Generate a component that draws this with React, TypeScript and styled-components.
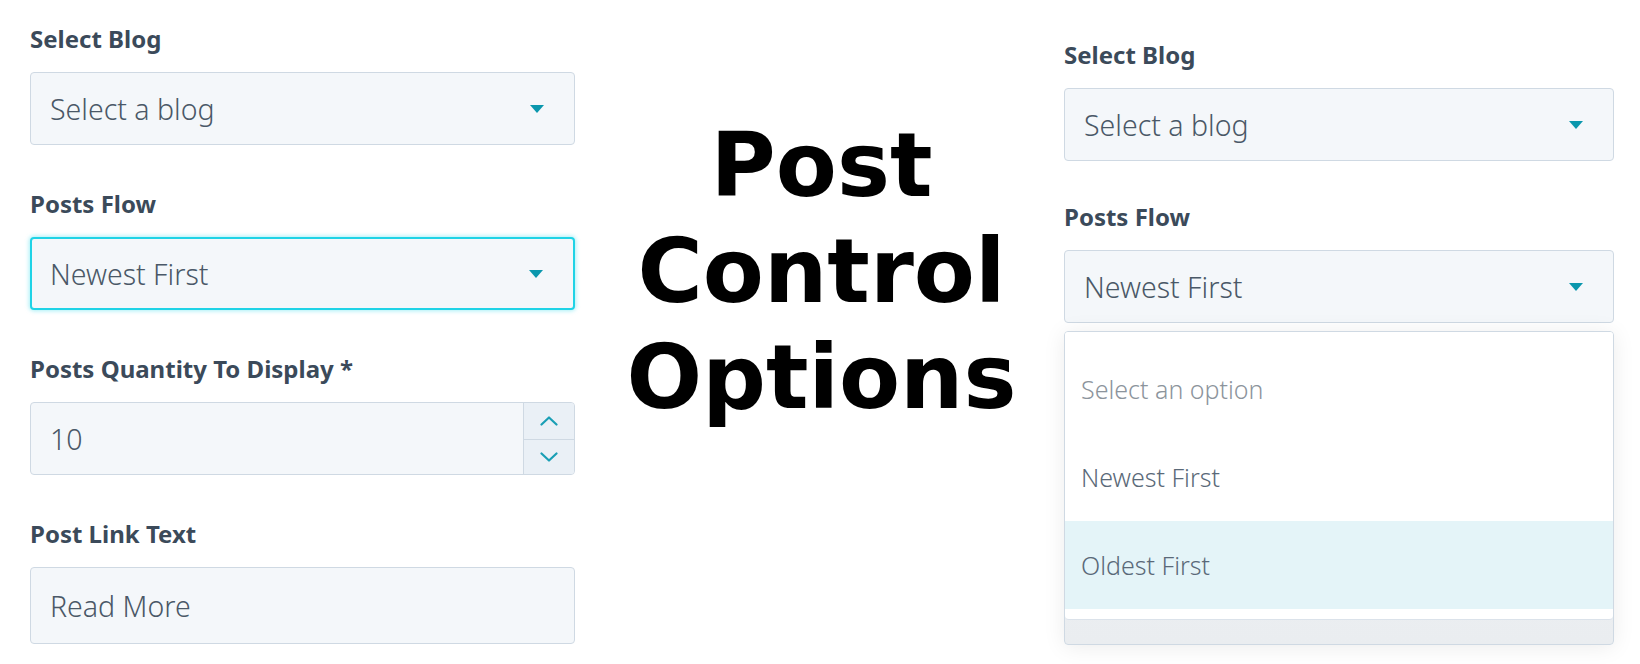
import React from "react";
import styled, { createGlobalStyle } from "styled-components";

const GlobalStyle = createGlobalStyle`
  html, body {
    margin: 0;
    padding: 0;
    background: #ffffff;
  }
  body {
    font-family: "Noto Sans", "Liberation Sans", sans-serif;
  }
`;

const Page = styled.div`
  width: 1640px;
  height: 664px;
  box-sizing: border-box;
  display: grid;
  grid-template-columns: 545px 1fr 550px;
  padding: 0 26px 0 30px;
  overflow: hidden;
`;

const Column = styled.div<{ $top: number; $gap: number }>`
  display: flex;
  flex-direction: column;
  gap: ${(p) => p.$gap}px;
  padding-top: ${(p) => p.$top}px;
`;

const Field = styled.div`
  display: flex;
  flex-direction: column;
  gap: 19px;
`;

const Label = styled.label`
  font-size: 24px;
  line-height: 28px;
  font-weight: 700;
  color: #3b4a5a;
`;

const Control = styled.div<{ $focused?: boolean; $h?: number }>`
  height: ${(p) => p.$h ?? 73}px;
  box-sizing: border-box;
  display: flex;
  align-items: center;
  background: #f4f7fa;
  border: ${(p) => (p.$focused ? "2px solid #1fd3e6" : "1px solid #cfd9e3")};
  border-radius: 4px;
  box-shadow: ${(p) =>
    p.$focused ? "0 0 4px 1px rgba(0, 208, 228, 0.35)" : "none"};
  padding-left: ${(p) => (p.$focused ? 18 : 19)}px;
  font-size: 28.5px;
  font-weight: 300;
  line-height: 34px;
  color: #4a5867;
  overflow: hidden;
`;

const Value = styled.span`
  flex: 1;
  white-space: nowrap;
`;

const CaretBox = styled.span`
  display: flex;
  align-items: center;
  margin-right: 30px;
`;

const Spinner = styled.div`
  align-self: stretch;
  width: 50px;
  display: grid;
  grid-template-rows: 1fr 1fr;
  background: #eaf0f6;
  border-left: 1px solid #cfd9e3;
`;

const StepButton = styled.div<{ $down?: boolean }>`
  display: flex;
  align-items: center;
  justify-content: center;
  border-top: ${(p) => (p.$down ? "1px solid #cfd9e3" : "none")};
`;

const TitleCell = styled.div`
  display: flex;
  justify-content: center;
  padding-left: 4px;
`;

const Title = styled.h1`
  margin: 0;
  padding-top: 112px;
  font-family: "DejaVu Sans", "Liberation Sans", sans-serif;
  font-weight: 700;
  font-size: 89px;
  line-height: 106px;
  text-align: center;
  color: #000000;
`;

const SelectStack = styled.div`
  display: flex;
  flex-direction: column;
  gap: 8px;
`;

const Menu = styled.div`
  border: 1px solid #cfd9e3;
  border-radius: 4px;
  background: linear-gradient(#f0f3f6, #eaedf0);
  box-shadow: 0 2px 22px rgba(0, 0, 0, 0.08);
  padding-bottom: 24px;
  overflow: hidden;
`;

const OptionList = styled.div`
  background: #ffffff;
  padding: 13px 0 10px;
  border-bottom: 1px solid #dbe2ea;
  border-radius: 0 0 4px 4px;
`;

const Option = styled.div<{ $placeholder?: boolean; $active?: boolean }>`
  height: 88px;
  display: flex;
  align-items: center;
  padding-left: 16px;
  font-size: 25px;
  font-weight: 300;
  color: ${(p) => (p.$placeholder ? "#8c949c" : "#5a6978")};
  background: ${(p) => (p.$active ? "#e4f4f8" : "transparent")};
`;

const Caret = () => (
  <CaretBox>
    <svg width="14" height="8" viewBox="0 0 14 8">
      <polygon points="0,0 14,0 7,8" fill="#0a97ad" />
    </svg>
  </CaretBox>
);

const Chevron = ({ down }: { down?: boolean }) => (
  <svg width="18" height="10" viewBox="0 0 18 10">
    <path
      d={down ? "M1.5 1.5 L9 8.5 L16.5 1.5" : "M1.5 8.5 L9 1.5 L16.5 8.5"}
      fill="none"
      stroke="#1a9fb5"
      strokeWidth="2.2"
      strokeLinecap="round"
      strokeLinejoin="round"
    />
  </svg>
);

export default function App() {
  return (
    <>
      <GlobalStyle />
      <Page>
        <Column $top={25} $gap={45}>
          <Field>
            <Label>Select Blog</Label>
            <Control>
              <Value>Select a blog</Value>
              <Caret />
            </Control>
          </Field>
          <Field>
            <Label>Posts Flow</Label>
            <Control $focused>
              <Value>Newest First</Value>
              <Caret />
            </Control>
          </Field>
          <Field>
            <Label>Posts Quantity To Display *</Label>
            <Control>
              <Value>10</Value>
              <Spinner>
                <StepButton>
                  <Chevron />
                </StepButton>
                <StepButton $down>
                  <Chevron down />
                </StepButton>
              </Spinner>
            </Control>
          </Field>
          <Field>
            <Label>Post Link Text</Label>
            <Control $h={77}>
              <Value>Read More</Value>
            </Control>
          </Field>
        </Column>

        <TitleCell>
          <Title>
            Post
            <br />
            Control
            <br />
            Options
          </Title>
        </TitleCell>

        <Column $top={41} $gap={42}>
          <Field>
            <Label>Select Blog</Label>
            <Control>
              <Value>Select a blog</Value>
              <Caret />
            </Control>
          </Field>
          <Field>
            <Label>Posts Flow</Label>
            <SelectStack>
              <Control>
                <Value>Newest First</Value>
                <Caret />
              </Control>
              <Menu>
                <OptionList>
                  <Option $placeholder>Select an option</Option>
                  <Option>Newest First</Option>
                  <Option $active>Oldest First</Option>
                </OptionList>
              </Menu>
            </SelectStack>
          </Field>
        </Column>
      </Page>
    </>
  );
}
